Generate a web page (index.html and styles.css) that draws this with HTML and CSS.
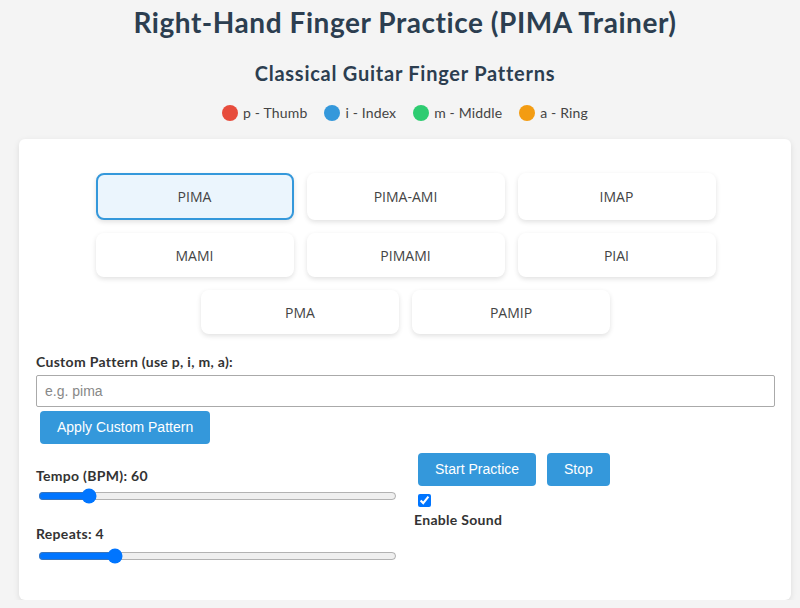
FILE: index.html
```html
<!DOCTYPE html>
<html lang="en">
<head>
<meta charset="utf-8">
<title>Right-Hand Finger Practice (PIMA Trainer)</title>
<link rel="stylesheet" href="styles.css">
</head>
<body>
<div class="page">
  <h1 class="title">Right-Hand Finger Practice (PIMA Trainer)</h1>
  <h2 class="subtitle">Classical Guitar Finger Patterns</h2>
  <div class="legend">
    <div class="legend-item"><span class="dot dot-p"></span><span>p - Thumb</span></div>
    <div class="legend-item"><span class="dot dot-i"></span><span>i - Index</span></div>
    <div class="legend-item"><span class="dot dot-m"></span><span>m - Middle</span></div>
    <div class="legend-item"><span class="dot dot-a"></span><span>a - Ring</span></div>
  </div>

  <div class="card">
    <div class="patterns">
      <button class="pattern active">PIMA</button>
      <button class="pattern">PIMA-AMI</button>
      <button class="pattern">IMAP</button>
      <button class="pattern">MAMI</button>
      <button class="pattern">PIMAMI</button>
      <button class="pattern">PIAI</button>
      <button class="pattern">PMA</button>
      <button class="pattern">PAMIP</button>
    </div>

    <label class="field-label" for="custom">Custom Pattern (use p, i, m, a):</label>
    <input id="custom" class="text-input" type="text" placeholder="e.g. pima">
    <div class="custom-actions">
      <button class="btn">Apply Custom Pattern</button>
    </div>

    <div class="controls">
      <div class="sliders">
        <div class="group">
          <label class="field-label" for="tempo">Tempo (BPM): 60</label>
          <input id="tempo" class="range" type="range" min="40" max="200" value="60">
        </div>
        <div class="group">
          <label class="field-label" for="repeats">Repeats: 4</label>
          <input id="repeats" class="range" type="range" min="1" max="16" value="4">
        </div>
      </div>
      <div class="actions">
        <div class="action-buttons">
          <button class="btn">Start Practice</button>
          <button class="btn">Stop</button>
        </div>
        <input id="sound" class="check" type="checkbox" checked>
        <label class="field-label" for="sound">Enable Sound</label>
      </div>
    </div>
  </div>
</div>
</body>
</html>
```

FILE: styles.css
```css
* { box-sizing: border-box; }

html, body {
  margin: 0;
  padding: 0;
  background: #f4f4f4;
}

body {
  font-family: Lato, "Open Sans", sans-serif;
  color: #333;
}

.page {
  padding: 0 9px 0 19px;
}

.title {
  margin: 4px 0 0;
  font-size: 28px;
  line-height: 36px;
  font-weight: 700;
  letter-spacing: 0.55px;
  text-align: center;
  color: #2c3e50;
}

.subtitle {
  margin: 19px 0 0;
  font-size: 20px;
  line-height: 28px;
  font-weight: 700;
  letter-spacing: 0.75px;
  text-align: center;
  color: #2c3e50;
}

.legend {
  margin-top: 16px;
  display: flex;
  justify-content: center;
  gap: 17px;
  font-size: 14px;
  line-height: 20px;
  letter-spacing: 0.15px;
  color: #444;
}

.legend-item {
  display: flex;
  align-items: center;
  gap: 5px;
}

.dot {
  width: 16px;
  height: 16px;
  border-radius: 50%;
  display: block;
}
.dot-p { background: #e74c3c; }
.dot-i { background: #3498db; }
.dot-m { background: #2ecc71; }
.dot-a { background: #f39c12; }

.card {
  margin-top: 16px;
  background: #fff;
  border-radius: 6px;
  box-shadow: 0 2px 6px rgba(0, 0, 0, 0.1);
  padding: 17px 16px 36px 17px;
}

.patterns {
  margin-top: 17px;
  display: flex;
  flex-wrap: wrap;
  justify-content: center;
  gap: 13px 13px;
}

.pattern {
  width: 198px;
  min-height: 44px;
  border: none;
  border-radius: 8px;
  background: #fff;
  box-shadow: 0 2px 5px rgba(0, 0, 0, 0.12);
  font-family: "Open Sans", "Noto Sans", sans-serif;
  font-size: 14px;
  color: #444;
  padding: 0;
}

.pattern.active {
  min-height: 47px;
  background: #ebf5fd;
  border: 2px solid #3498db;
}

.field-label {
  display: block;
  font-size: 14px;
  line-height: 20px;
  font-weight: 700;
  letter-spacing: 0.3px;
  color: #333;
}

.patterns + .field-label {
  margin-top: 18px;
}

.text-input {
  display: block;
  width: 100%;
  height: 32px;
  margin-top: 3px;
  padding: 0 8px;
  border: 1px solid #aaa;
  border-radius: 2px;
  font-family: "Liberation Sans", Arial, sans-serif;
  font-size: 14px;
  color: #333;
}

.text-input::placeholder {
  color: #888;
}

.custom-actions {
  display: flex;
  padding: 4px 4px 0;
}

.btn {
  border: none;
  border-radius: 4px;
  background: #3498db;
  color: #fff;
  font-family: "Liberation Sans", Arial, sans-serif;
  font-size: 14px;
  line-height: 17px;
  padding: 8px 17px;
}

.controls {
  margin-top: 5px;
  display: flex;
  gap: 14px;
}

.sliders {
  width: 364px;
  padding-top: 17px;
  display: flex;
  flex-direction: column;
  gap: 20px;
}

.group + .group .range {
  margin-top: 4px;
}

.range {
  display: block;
  width: 359px;
  height: 16px;
  margin: 2px 2px 0;
}

.actions {
  flex: 1;
}

.action-buttons {
  display: flex;
  gap: 3px;
}

.action-buttons .btn {
  margin: 4px;
}

.check {
  display: block;
  width: 13px;
  height: 13px;
  margin: 4px 3px 3px 4px;
}
```
